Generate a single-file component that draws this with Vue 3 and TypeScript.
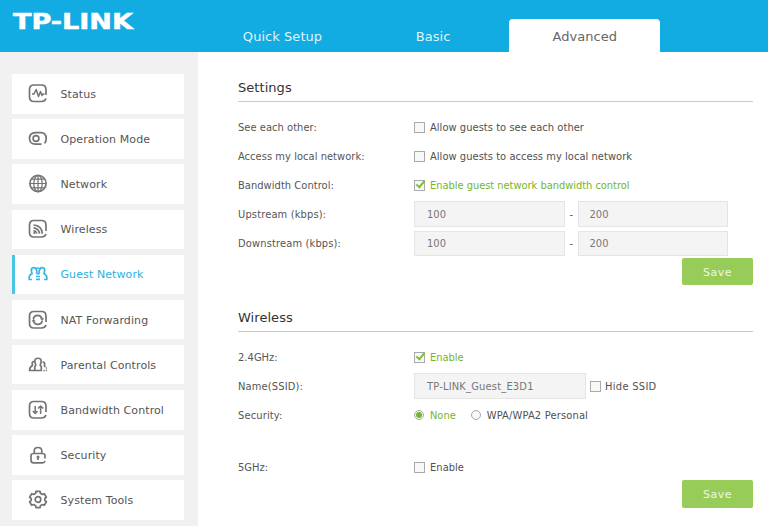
<script setup lang="ts">
import { ref } from 'vue'

type IconName = 'status' | 'mode' | 'network' | 'wireless' | 'guest' | 'nat' | 'parental' | 'bandwidth' | 'security' | 'tools'

interface MenuItem {
  label: string
  icon: IconName
}

const tabs = ['Quick Setup', 'Basic', 'Advanced']
const activeTab = ref('Advanced')

const menu: MenuItem[] = [
  { label: 'Status', icon: 'status' },
  { label: 'Operation Mode', icon: 'mode' },
  { label: 'Network', icon: 'network' },
  { label: 'Wireless', icon: 'wireless' },
  { label: 'Guest Network', icon: 'guest' },
  { label: 'NAT Forwarding', icon: 'nat' },
  { label: 'Parental Controls', icon: 'parental' },
  { label: 'Bandwidth Control', icon: 'bandwidth' },
  { label: 'Security', icon: 'security' },
  { label: 'System Tools', icon: 'tools' },
]
const activeItem = ref('Guest Network')

const seeEachOther = ref(false)
const accessLocal = ref(false)
const bandwidthControl = ref(true)
const upstream = ref(['100', '200'])
const downstream = ref(['100', '200'])
const enable24 = ref(true)
const ssid = ref('TP-LINK_Guest_E3D1')
const hideSsid = ref(false)
const security = ref('none')
const enable5 = ref(false)
</script>

<template>
  <div class="page">
    <header class="topbar">
      <svg class="logo" viewBox="0 0 124 32">
        <text x="0" y="22.500" textLength="120" lengthAdjust="spacingAndGlyphs">TP-LINK</text>
      </svg>
      <nav class="tabs">
        <a v-for="tab in tabs" :key="tab" class="tab" :class="{ active: tab === activeTab }" @click="activeTab = tab">{{ tab }}</a>
      </nav>
    </header>

    <div class="body">
      <aside class="sidebar">
        <a
          v-for="item in menu"
          :key="item.label"
          class="item"
          :class="{ active: item.label === activeItem }"
          @click="activeItem = item.label"
        >
          <svg class="icon" viewBox="0 0 20 20">
            <template v-if="item.icon === 'status'">
              <path d="M18 11V5.500Q18 1 13.500 1H6Q1.500 1 1.500 5.500V13Q1.500 17.500 6 17.500H13.500Q17 17.500 18 14.500" />
              <path class="mid" d="M4 10H6L8.200 5.500 10.500 12.500 12.500 7.500 14 11.500 15 10H16.500" />
            </template>
            <template v-else-if="item.icon === 'mode'">
              <path d="M16.500 14.300Q18.200 12.800 18.200 9.500Q18 3.600 13 3.600H7.500Q1.500 3.800 1.500 9.500Q1.700 15.200 7.500 15.200H13.500" />
              <circle cx="8" cy="9.500" r="2.900" />
            </template>
            <template v-else-if="item.icon === 'network'">
              <circle cx="10" cy="9.500" r="8.100" />
              <ellipse class="thin" cx="10" cy="9.500" rx="4.200" ry="8.100" />
              <path class="thin" d="M10 1.400V17.600M1.900 9.500H18.100M3.300 5.200H16.700M3.300 13.800H16.700" />
            </template>
            <template v-else-if="item.icon === 'wireless'">
              <path d="M18 12V6Q18 1.500 13.500 1.500H6Q1.500 1.500 1.500 6V13.500Q1.500 18 6 18H13.500Q17 18 18 15" />
              <path d="M5.500 6Q14 6.500 14.300 14.700M5.500 8.800Q11 9.500 11.500 14.700M5.500 11.800Q8.300 12 8.700 14.700" />
              <circle class="solid" cx="6.200" cy="14" r="1" />
            </template>
            <template v-else-if="item.icon === 'guest'">
              <path d="M8 4.700Q6.900 3.200 5 3.700Q2.800 4.300 3.500 7.500Q3.800 9.200 4 9.800Q1.200 11 1.200 13.300V15.500H4M8.500 9.500Q9.500 7.500 8.300 5.200" />
              <path d="M12 4.700Q13.100 3.200 15 3.700Q17.200 4.300 16.500 7.500Q16.200 9.200 16 9.800Q18.800 11 18.800 13.300V15.500H16M11.500 9.500Q10.500 7.500 11.700 5.200" />
              <path d="M7 5.500Q9.800 2.500 13 5.500M8.500 9.700H11.500M8 12.500H12M8 15.300H12" />
            </template>
            <template v-else-if="item.icon === 'nat'">
              <path d="M18 12V6Q18 1.500 13.500 1.500H6Q1.500 1.500 1.500 6V13.500Q1.500 18 6 18H13.500Q17 18 18 15" />
              <path d="M5.300 9Q6 5.300 9.800 5.300Q13 5.300 14 8.500M14.300 10.700Q13.500 14.300 9.800 14.300Q6.500 14.300 5.500 11.200" />
              <path class="solid" d="M11.800 8.300H16.200L14.300 10.800ZM3.500 11.400H7.800L5.500 8.700Z" />
            </template>
            <template v-else-if="item.icon === 'parental'">
              <path d="M6.800 15.500V11.800L7.800 10Q5.500 4.500 8.500 3.500Q10 3 11.500 3.500Q14.500 4.500 12.200 10L13.300 11.800V15.500Z" />
              <path d="M6 6.500Q3.700 6.500 4.300 9.500L4.500 10.500Q1.500 12 1.500 15.500H6.500M14.500 7Q17.200 7 16.500 10V11L17.300 12M15.500 15.500H16.800M17.800 13H19M17.800 15.500H19" />
            </template>
            <template v-else-if="item.icon === 'bandwidth'">
              <path d="M18 12V6Q18 1.500 13.500 1.500H6Q1.500 1.500 1.500 6V13.500Q1.500 18 6 18H13.500Q17 18 18 15" />
              <path class="mid" d="M7.200 6V13M4.800 11L7.200 13.500 9.500 11M12.600 14V6.500M10 8.500L12.600 6 15.300 8.500" />
            </template>
            <template v-else-if="item.icon === 'security'">
              <path d="M17 13.500V10.800Q17 8.500 14.500 8.500H5.500Q3 8.500 3 10.800V15.300Q3 17.800 5.500 17.800H14.500Q16.500 17.800 17 16M6.200 8.300V6Q6.200 2.500 10 2.500Q13.800 2.500 13.800 6V8.300M10 12V15" />
              <circle class="solid" cx="10" cy="12" r="1.500" />
            </template>
            <template v-else>
              <path d="M7.700 3.300L7.900 1.300H12.100L12.400 3.300L14.400 4.500L16.300 3.700L18.400 7.300L16.800 8.500V10.500L18.400 11.700L16.300 15.300L14.400 14.500L12.400 15.700L12.100 17.700H7.900L7.700 15.700L5.600 14.500L3.700 15.300L1.600 11.700L3.200 10.500V8.500L1.600 7.300L3.700 3.700L5.600 4.500Z" />
              <circle cx="10" cy="9.500" r="2.800" />
            </template>
          </svg>
          <span>{{ item.label }}</span>
        </a>
      </aside>

      <main class="content">
        <section class="panel">
          <h2>Settings</h2>
          <div class="rows">
            <div class="row">
              <span class="name">See each other:</span>
              <label class="option" :class="{ on: seeEachOther }"><input v-model="seeEachOther" type="checkbox" />Allow guests to see each other</label>
            </div>
            <div class="row">
              <span class="name">Access my local network:</span>
              <label class="option" :class="{ on: accessLocal }"><input v-model="accessLocal" type="checkbox" />Allow guests to access my local network</label>
            </div>
            <div class="row">
              <span class="name">Bandwidth Control:</span>
              <label class="option" :class="{ on: bandwidthControl }"><input v-model="bandwidthControl" type="checkbox" />Enable guest network bandwidth control</label>
            </div>
            <div class="row">
              <span class="name spaced">Upstream (kbps):</span>
              <input v-model="upstream[0]" class="field" type="text" /><span class="dash">-</span><input v-model="upstream[1]" class="field" type="text" />
            </div>
            <div class="row">
              <span class="name spaced">Downstream (kbps):</span>
              <input v-model="downstream[0]" class="field short" type="text" /><span class="dash">-</span><input v-model="downstream[1]" class="field short" type="text" />
            </div>
          </div>
          <button class="save">Save</button>
        </section>

        <section class="panel radio-panel">
          <h2>Wireless</h2>
          <div class="rows">
            <div class="row">
              <span class="name">2.4GHz:</span>
              <label class="option" :class="{ on: enable24 }"><input v-model="enable24" type="checkbox" />Enable</label>
            </div>
            <div class="row">
              <span class="name spaced">Name(SSID):</span>
              <input v-model="ssid" class="field wide" type="text" />
              <label class="option hide" :class="{ on: hideSsid }"><input v-model="hideSsid" type="checkbox" />Hide SSID</label>
            </div>
            <div class="row">
              <span class="name spaced">Security:</span>
              <label class="option" :class="{ on: security === 'none' }"><input v-model="security" type="radio" value="none" />None</label>
              <label class="option second" :class="{ on: security === 'wpa' }"><input v-model="security" type="radio" value="wpa" />WPA/WPA2 Personal</label>
            </div>
            <div class="row band5">
              <span class="name">5GHz:</span>
              <label class="option" :class="{ on: enable5 }"><input v-model="enable5" type="checkbox" />Enable</label>
            </div>
          </div>
          <button class="save">Save</button>
        </section>
      </main>
    </div>
  </div>
</template>

<style>
body {
  overflow: hidden;
}
</style>

<style scoped>
.page {
  box-sizing: border-box;
  width: 768px;
  height: 526px;
  overflow: hidden;
  display: flex;
  flex-direction: column;
  background: #fff;
  font-family: 'DejaVu Sans', sans-serif;
  color: #555;
}

.topbar {
  height: 52.400px;
  flex: none;
  display: flex;
  align-items: flex-end;
  background: #12abe2;
}

.logo {
  width: 124px;
  height: 32px;
  margin: 0 71px 14px 13px;
  overflow: visible;
}

.logo text {
  font: bold 21px 'DejaVu Sans', sans-serif;
  fill: #fff;
  stroke: #fff;
  stroke-width: 0.500;
}

.tabs {
  display: flex;
  font-size: 13px;
  letter-spacing: 0.050px;
}

.tab {
  width: 151px;
  height: 33.400px;
  line-height: 35px;
  text-align: center;
  color: #dff5fc;
}

.tab:nth-child(1) {
  width: 149px;
}

.tab:nth-child(2) {
  width: 152.300px;
}

.tab.active {
  background: #fff;
  color: #666;
  border-radius: 4px 4px 0 0;
}

.body {
  flex: 1;
  min-height: 0;
  display: flex;
}

.sidebar {
  box-sizing: border-box;
  width: 198px;
  flex: none;
  padding: 21.700px 14px 0 12px;
  background: #f1f1f1;
  display: flex;
  flex-direction: column;
  gap: 5.650px;
}

.item {
  box-sizing: border-box;
  height: 39.500px;
  flex: none;
  display: flex;
  align-items: center;
  padding-left: 16px;
  background: #fff;
  font-size: 11px;
  letter-spacing: 0.100px;
}

.item span {
  padding-top: 1px;
}

.item.active {
  border-left: 3px solid #4cc4e6;
  padding-left: 13px;
  color: #2bb1e2;
}

.icon {
  width: 20px;
  height: 20px;
  margin-right: 12.500px;
  fill: none;
  stroke: #747474;
  stroke-width: 1.700;
  stroke-linejoin: round;
}

.active .icon {
  stroke: #35b6e6;
}

.icon .thin {
  stroke-width: 1.200;
}

.icon .mid {
  stroke-width: 1.500;
}

.icon .solid {
  fill: #747474;
  stroke: none;
}

.content {
  flex: 1;
  padding: 23.600px 15px 0 40px;
  font: 11px 'DejaVu Sans Condensed', 'DejaVu Sans', sans-serif;
  letter-spacing: 0.050px;
}

.panel {
  display: flex;
  flex-direction: column;
}

.radio-panel {
  margin-top: 20.500px;
}

h2 {
  margin: 0;
  height: 25px;
  border-bottom: 1px solid #c9c9c9;
  font: 13px/24px 'DejaVu Sans', sans-serif;
  letter-spacing: 0.050px;
  color: #333;
}

.rows {
  padding-top: 11.500px;
}

.radio-panel .rows {
  padding-top: 11.200px;
}

.row {
  display: flex;
  align-items: center;
  height: 28.800px;
}

.name {
  width: 176px;
  flex: none;
}

.name.spaced {
  letter-spacing: 0.150px;
}

.option {
  display: flex;
  align-items: center;
  color: #505050;
}

.option.on {
  color: #77b529;
  letter-spacing: -0.030px;
}

.option input {
  appearance: none;
  box-sizing: border-box;
  width: 11px;
  height: 11px;
  margin: 0 5px 0 0;
  border: 1px solid #aaa;
  background: #f8f8f8;
  display: grid;
  place-items: center;
}

.option input[type='checkbox']:checked::before {
  content: '';
  width: 3px;
  height: 7px;
  margin: -4px 0 0 1px;
  border: solid #7fc035;
  border-width: 0 2px 2px 0;
  transform: rotate(40deg);
}

.option input[type='radio'] {
  width: 10px;
  height: 10px;
  border-radius: 50%;
  margin-right: 6px;
}

.option input[type='radio']:checked::before {
  content: '';
  width: 6px;
  height: 6px;
  border-radius: 50%;
  background: #73b72b;
}

.hide {
  margin-left: 4px;
  letter-spacing: 0.300px;
}

.hide input {
  margin-right: 4px;
}

.second {
  margin-left: 15px;
  letter-spacing: 0.170px;
}

.field {
  box-sizing: border-box;
  width: 151px;
  height: 26px;
  padding: 0 12px;
  border: 1px solid #e4e4e4;
  border-radius: 0;
  background: #f4f4f4;
  color: #777;
  font: inherit;
  letter-spacing: 0.050px;
  outline: none;
}

.field.short {
  height: 25px;
}

.dash {
  width: 12.500px;
  text-align: center;
}

.dash + .field {
  width: 150px;
  padding-left: 11px;
}

.field.wide {
  width: 172px;
  letter-spacing: 0.200px;
}

.band5 {
  margin-top: 23.700px;
}

.save {
  align-self: flex-end;
  width: 71px;
  height: 27.500px;
  margin-top: 0.500px;
  padding: 1px 0 0;
  border: 0;
  border-radius: 2px;
  background: #97cc58;
  color: #edf7e0;
  font: 11px 'DejaVu Sans', sans-serif;
  letter-spacing: 0.450px;
}

.radio-panel .save {
  margin-top: -1.800px;
}
</style>
